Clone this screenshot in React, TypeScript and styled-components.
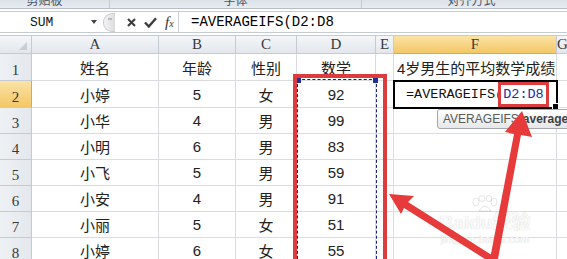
import styled, { createGlobalStyle } from "styled-components";

const CJK = `"Noto Sans CJK SC", sans-serif`;
const MONO = `"Liberation Mono", "DejaVu Sans Mono", monospace`;
const SERIF = `"Liberation Serif", serif`;

const LETTERS = ["A", "B", "C", "D", "E", "F", "G"];

const data = [
  ["姓名", "年龄", "性别", "数学"],
  ["小婷", "5", "女", "92"],
  ["小华", "4", "男", "99"],
  ["小明", "6", "男", "83"],
  ["小飞", "5", "男", "59"],
  ["小安", "4", "男", "91"],
  ["小丽", "5", "女", "51"],
  ["小婷", "6", "女", "55"],
];

export default function App() {
  return (
    <Page>
      <GlobalStyle />
      <Ribbon>
        <RibbonGroup $width={110} $pad={20}>剪贴板</RibbonGroup>
        <RibbonGroup $width={252}>字体</RibbonGroup>
        <RibbonGroup $width={220}>对齐方式</RibbonGroup>
      </Ribbon>

      <FormulaBar>
        <NameBox>
          SUM
          <DropArrow />
        </NameBox>
        <Knob />
        <ToolIcons>
          <svg width="9" height="9" viewBox="0 0 9 9">
            <path d="M1 1 L8 8 M8 1 L1 8" stroke="#3c3c3c" strokeWidth="2.1" />
          </svg>
          <svg width="13" height="11" viewBox="0 0 13 11">
            <path d="M1 5.5 L4.8 9.5 L12 1.2" stroke="#3c3c3c" strokeWidth="2.4" fill="none" />
          </svg>
          <Fx>
            f<small>x</small>
          </Fx>
        </ToolIcons>
        <FormulaInput>=AVERAGEIFS(D2:D8</FormulaInput>
      </FormulaBar>

      <Sheet>
        <Corner />
        {LETTERS.map((l) => (
          <ColHeader key={l} $active={l === "F"}>
            {l}
          </ColHeader>
        ))}
        {data.map((row, i) => (
          <Row key={i} index={i} row={row} />
        ))}
      </Sheet>

      <RangeAnts />
      <MarkBox $left={293} $top={74} $width={94} $height={200} $weight={4} />
      <MarkBox $left={498} $top={82} $width={51} $height={25} $weight={3} />

      <Tooltip>
        AVERAGEIFS(<b>average</b>
      </Tooltip>

      <Watermark>
        <svg width="28" height="18" viewBox="0 0 28 18">
          <g fill="none" stroke="rgba(0,0,0,0.1)" strokeWidth="1">
            <ellipse cx="5" cy="7" rx="3" ry="4" />
            <ellipse cx="11" cy="3.5" rx="3" ry="3" />
            <ellipse cx="18" cy="3.5" rx="3" ry="3" />
            <ellipse cx="23" cy="7" rx="3" ry="4" />
            <path d="M8 16 Q14 6 20 16 Z" />
          </g>
        </svg>
        <WmTitle>Baidu经验</WmTitle>
        <WmUrl>jingyan.baidu.com</WmUrl>
      </Watermark>

      <Arrows viewBox="0 0 567 259">
        <polygon
          points="522,111 532,137 521,135 498,259 490,259 514,134 505,132"
          fill="#e63a3b"
        />
        <polygon
          points="389,194 414,196 408,202 498,259 485,259 404,208 401,214"
          fill="#e63a3b"
        />
      </Arrows>
    </Page>
  );
}

function Row({ index, row }: { index: number; row: string[] }) {
  const active = index === 1;
  return (
    <>
      <RowHeader $active={active}>{index + 1}</RowHeader>
      {row.map((v, j) => (
        <Cell key={j}>{v}</Cell>
      ))}
      <Cell />
      {index === 0 && <Cell $left>4岁男生的平均数学成绩</Cell>}
      {index === 1 && (
        <Cell $left $active>
          <EditText>
            =AVERAGEIFS(<RefText>D2:D8</RefText>
            <Caret />
          </EditText>
        </Cell>
      )}
      {index > 1 && <Cell />}
      <Cell />
    </>
  );
}

const GlobalStyle = createGlobalStyle`
  html, body { margin: 0; padding: 0; background: #fff; }
  body { width: 567px; height: 259px; overflow: hidden; }
`;

const Page = styled.div`
  position: relative;
  width: 567px;
  height: 259px;
  overflow: hidden;
  background: #fff;
  font-family: ${CJK};
`;

const Ribbon = styled.div`
  display: flex;
  height: 8px;
  overflow: hidden;
  background: linear-gradient(#dde2e8, #e9ecf0);
  border-bottom: 1px solid #b6bec9;
  margin-bottom: 2px;
`;

const RibbonGroup = styled.div<{ $width: number; $pad?: number }>`
  flex: 0 0 ${(p) => p.$width}px;
  box-sizing: border-box;
  padding-right: ${(p) => p.$pad ?? 0}px;
  border-right: 1px solid #c4cad3;
  text-align: center;
  font-size: 12px;
  line-height: 12px;
  margin-top: -6px;
  color: #4a5566;
`;

const FormulaBar = styled.div`
  display: flex;
  align-items: center;
  height: 20px;
  border-top: 1px solid #c5cbd3;
  border-bottom: 1px solid #c5cbd3;
  background: #fff;
  margin-bottom: 2px;
`;

const NameBox = styled.div`
  display: flex;
  align-items: center;
  width: 103px;
  box-sizing: border-box;
  padding-left: 30px;
  font-family: ${MONO};
  font-size: 13px;
  color: #111;
`;

const DropArrow = styled.span`
  margin-left: auto;
  margin-right: 6px;
  width: 0;
  height: 0;
  border-left: 3px solid transparent;
  border-right: 3px solid transparent;
  border-top: 4px solid #444;
`;

const Knob = styled.div`
  width: 11px;
  height: 17px;
  border: 1px solid #c9cdd2;
  border-right: none;
  border-radius: 9px 0 0 9px;
  background: linear-gradient(90deg, #f4f4f4, #dcdcdc);
  position: relative;
  &::after {
    content: "";
    position: absolute;
    left: 4px;
    top: 4px;
    width: 4px;
    height: 2px;
    background: #b9bdc2;
  }
`;

const ToolIcons = styled.div`
  display: flex;
  align-items: center;
  gap: 8px;
  padding-left: 12px;
  width: 64px;
  height: 100%;
  box-sizing: border-box;
  border-right: 1px solid #c9ced6;
`;

const Fx = styled.span`
  font-family: ${SERIF};
  font-style: italic;
  font-size: 15px;
  color: #333;
  line-height: 1;
  small {
    font-size: 10px;
  }
`;

const FormulaInput = styled.div`
  flex: 1;
  padding-left: 12px;
  font-family: ${MONO};
  font-size: 14px;
  color: #000;
  white-space: nowrap;
`;

const Sheet = styled.div`
  display: grid;
  grid-template-columns: 32px 127px 77px 61px 79px 18px 163px 1fr;
  grid-template-rows: 18px 27px 27px repeat(6, 26px);
  border-top: 1px solid #c5cbd3;
`;

const Corner = styled.div`
  position: relative;
  background: linear-gradient(#f4f6f9, #e3e7ec);
  border-right: 1px solid #c5cbd3;
  border-bottom: 1px solid #c5cbd3;
  &::after {
    content: "";
    position: absolute;
    right: 4px;
    bottom: 3px;
    border-left: 8px solid transparent;
    border-bottom: 8px solid #c9ced5;
  }
`;

const ColHeader = styled.div<{ $active?: boolean }>`
  display: flex;
  align-items: center;
  justify-content: center;
  background: ${(p) =>
    p.$active
      ? "linear-gradient(#fbe3a6, #f3c766)"
      : "linear-gradient(#f4f6f9, #e3e7ec)"};
  border-right: 1px solid #c5cbd3;
  border-bottom: 1px solid ${(p) => (p.$active ? "#e2a93a" : "#c5cbd3")};
  font-family: ${SERIF};
  font-size: 15px;
  color: #3a3a3a;
`;

const RowHeader = styled.div<{ $active?: boolean }>`
  display: flex;
  align-items: flex-end;
  justify-content: center;
  padding-bottom: 1px;
  box-sizing: border-box;
  background: ${(p) =>
    p.$active
      ? "linear-gradient(#fbe3a6, #f3c766)"
      : "linear-gradient(90deg, #eef1f4, #e4e8ed)"};
  border-right: 1px solid ${(p) => (p.$active ? "#e2a93a" : "#c5cbd3")};
  border-bottom: 1px solid #c5cbd3;
  font-family: ${SERIF};
  font-size: 15px;
  color: #3a3a3a;
`;

const Cell = styled.div<{ $left?: boolean; $active?: boolean }>`
  position: relative;
  display: flex;
  align-items: center;
  justify-content: ${(p) => (p.$left ? "flex-start" : "center")};
  padding-left: ${(p) => (p.$left ? "3px" : "0")};
  border-right: 1px solid #dadcdf;
  border-bottom: 1px solid #dadcdf;
  font-family: "Liberation Sans", ${CJK};
  font-size: 15px;
  color: #222;
  white-space: nowrap;
  outline: ${(p) => (p.$active ? "2px solid #000" : "none")};
  outline-offset: -1px;
  z-index: ${(p) => (p.$active ? 2 : 0)};
  &::after {
    content: "";
    display: ${(p) => (p.$active ? "block" : "none")};
    position: absolute;
    right: -3px;
    bottom: -3px;
    width: 5px;
    height: 5px;
    background: #000;
    border: 1px solid #fff;
  }
`;

const EditText = styled.span`
  display: flex;
  align-items: center;
  padding-left: 9px;
  font-family: ${MONO};
  font-size: 13.5px;
  color: #111;
`;

const RefText = styled.span`
  color: #1d2aa8;
`;

const Caret = styled.span`
  width: 1px;
  height: 17px;
  margin-left: 3px;
  background: #000;
`;

const RangeAnts = styled.div`
  position: absolute;
  left: 297px;
  top: 79px;
  width: 80px;
  height: 190px;
  box-sizing: border-box;
  border: 1px dashed #17207a;
  &::before,
  &::after {
    content: "";
    position: absolute;
    top: -2px;
    width: 5px;
    height: 5px;
    background: #1f2f96;
  }
  &::before {
    left: -2px;
  }
  &::after {
    right: -2px;
  }
`;

const MarkBox = styled.div<{
  $left: number;
  $top: number;
  $width: number;
  $height: number;
  $weight: number;
}>`
  position: absolute;
  left: ${(p) => p.$left}px;
  top: ${(p) => p.$top}px;
  width: ${(p) => p.$width}px;
  height: ${(p) => p.$height}px;
  box-sizing: border-box;
  border: ${(p) => p.$weight}px solid #dd3c3e;
  z-index: 3;
`;

const Tooltip = styled.div`
  position: absolute;
  left: 437px;
  top: 109px;
  width: 150px;
  height: 20px;
  box-sizing: border-box;
  padding-left: 5px;
  border: 1px solid #a3a6ab;
  border-radius: 3px;
  background: linear-gradient(#ffffff, #e6e7e9);
  font-family: "Liberation Sans", sans-serif;
  font-size: 12px;
  line-height: 18px;
  color: #5a5a5a;
  white-space: nowrap;
  z-index: 4;
  b {
    color: #3f3f3f;
  }
`;

const Watermark = styled.div`
  position: absolute;
  left: 435px;
  top: 195px;
  width: 100px;
  display: flex;
  flex-direction: column;
  align-items: center;
  z-index: 4;
  color: rgba(255, 255, 255, 0.9);
  text-shadow: 0 0 1px rgba(0, 0, 0, 0.22);
`;

const WmTitle = styled.div`
  font-family: "Liberation Sans", ${CJK};
  font-weight: bold;
  font-size: 19px;
  line-height: 20px;
`;

const WmUrl = styled.div`
  font-family: "Liberation Sans", sans-serif;
  font-size: 11px;
  line-height: 12px;
`;

const Arrows = styled.svg`
  position: absolute;
  left: 0;
  top: 0;
  width: 567px;
  height: 259px;
  z-index: 5;
  pointer-events: none;
`;
